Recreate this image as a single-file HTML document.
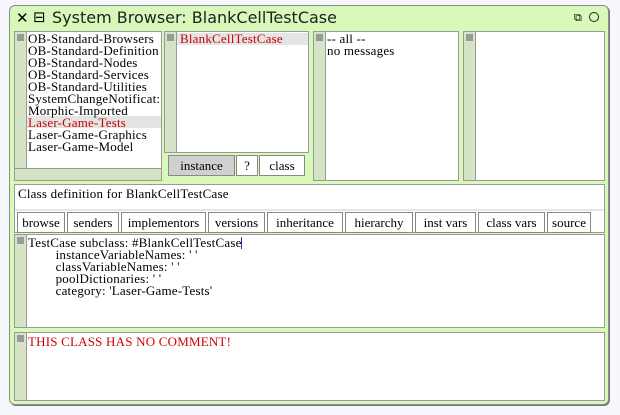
<!DOCTYPE html>
<html><head><style>
*{box-sizing:border-box;margin:0;padding:0}
body{width:620px;height:415px;background:#f6f8fd;position:relative;overflow:hidden;font-family:"Liberation Serif",serif;font-size:13px;color:#000}
.a{position:absolute}
.win{left:9px;top:5px;width:600px;height:400px;background:#d9f9bb;border:1px solid #8c8c8c;border-radius:6px;box-shadow:1px 1px 0 #777}
.pane{position:absolute;background:#fff;border:1px solid #999}
.sb{position:absolute;left:0;top:0;bottom:0;width:12px;background:#d6e4c6;border-right:1px solid #999}
.sb i{position:absolute;left:2px;width:7px;height:7px;background:#999;display:block}
.t{position:absolute;white-space:pre;line-height:12px;letter-spacing:0.2px}
.btn{position:absolute;top:212px;height:21px;border:1px solid #888;background:#fff;text-align:center;line-height:19px;font-size:13px}
.red{color:#c00}
</style></head><body>
<div class="a win"></div>
<div class="a" style="left:16px;top:9px;font:15px 'DejaVu Sans',sans-serif">✕</div>
<div class="a" style="left:33px;top:8px;font:15px 'DejaVu Sans',sans-serif">⊟</div>
<div class="a" style="left:52px;top:8px;font:16px 'DejaVu Sans',sans-serif;color:#222">System Browser: BlankCellTestCase</div>
<div class="a" style="left:574px;top:11px;font:11px 'DejaVu Sans',sans-serif">⧉</div>
<div class="a" style="left:589px;top:12px;width:10px;height:10px;border:1.5px solid #222;border-radius:50%"></div>

<div class="pane" style="left:14px;top:31px;width:148px;height:150px;overflow:hidden">
 <div class="sb" style="bottom:12px"><i style="top:2px"></i></div>
 <div class="a" style="left:12px;top:84px;width:134px;height:12px;background:#e4e4e4"></div>
 <div class="t" style="left:13px;top:1px">OB-Standard-Browsers
OB-Standard-Definition
OB-Standard-Nodes
OB-Standard-Services
OB-Standard-Utilities
SystemChangeNotificat:
Morphic-Imported
<span class="red">Laser-Game-Tests</span>
Laser-Game-Graphics
Laser-Game-Model</div>
 <div class="a" style="left:0;right:0;bottom:0;height:12px;background:#d6e4c6;border-top:1px solid #999"></div>
</div>

<div class="pane" style="left:164px;top:31px;width:145px;height:122px">
  <div class="sb"><i style="top:2px"></i></div>
  <div class="a" style="left:12px;top:1px;width:131px;height:12px;background:#e4e4e4"></div>
  <div class="t red" style="left:15px;top:1px">BlankCellTestCase</div>
</div>
<div class="btn" style="left:168px;top:155px;width:67px;background:#d0d0d0">instance</div>
<div class="btn" style="left:236px;top:155px;width:22px">?</div>
<div class="btn" style="left:259px;top:155px;width:46px">class</div>

<div class="pane" style="left:313px;top:31px;width:146px;height:150px">
 <div class="sb"><i style="top:2px"></i></div>
 <div class="t" style="left:13px;top:1px">-- all --
no messages</div>
</div>
<div class="pane" style="left:463px;top:31px;width:142px;height:150px">
 <div class="sb"><i style="top:2px"></i></div>
</div>

<div class="pane" style="left:14px;top:184px;width:591px;height:49px">
 <div class="t" style="left:3px;top:3px">Class definition for BlankCellTestCase</div>
 <div class="a" style="left:0;right:0;top:24px;height:2px;background:#e6e6e6"></div>
</div>
<div class="btn" style="left:17px;width:48px">browse</div>
<div class="btn" style="left:67px;width:52px">senders</div>
<div class="btn" style="left:121px;width:85px">implementors</div>
<div class="btn" style="left:208px;width:57px">versions</div>
<div class="btn" style="left:267px;width:76px">inheritance</div>
<div class="btn" style="left:345px;width:68px">hierarchy</div>
<div class="btn" style="left:415px;width:61px">inst vars</div>
<div class="btn" style="left:478px;width:67px">class vars</div>
<div class="btn" style="left:547px;width:44px">source</div>

<div class="pane" style="left:14px;top:234px;width:591px;height:94px">
 <div class="sb"><i style="top:2px"></i></div>
 <div class="t" style="left:13px;top:2px">TestCase subclass: #BlankCellTestCase
        instanceVariableNames: ' '
        classVariableNames: ' '
        poolDictionaries: ' '
        category: 'Laser-Game-Tests'</div>
 <div class="a" style="left:226px;top:2px;width:1px;height:12px;background:#33a"></div>
</div>
<div class="pane" style="left:14px;top:332px;width:591px;height:69px">
 <div class="sb"><i style="top:2px"></i></div>
 <div class="t red" style="left:13px;top:3px">THIS CLASS HAS NO COMMENT!</div>
</div>
</body></html>
